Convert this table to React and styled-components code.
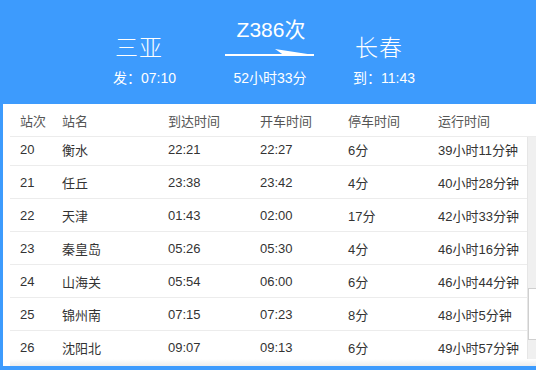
import styled, { createGlobalStyle } from "styled-components";

const GlobalStyle = createGlobalStyle`
  html, body {
    margin: 0;
    padding: 0;
  }
  body {
    font-family: "Liberation Sans", "Noto Sans CJK SC", sans-serif;
    background: #3d9bfd;
  }
`;

const stops = [
  { no: 20, name: "衡水", arrive: "22:21", depart: "22:27", stay: "6分", run: "39小时11分钟" },
  { no: 21, name: "任丘", arrive: "23:38", depart: "23:42", stay: "4分", run: "40小时28分钟" },
  { no: 22, name: "天津", arrive: "01:43", depart: "02:00", stay: "17分", run: "42小时33分钟" },
  { no: 23, name: "秦皇岛", arrive: "05:26", depart: "05:30", stay: "4分", run: "46小时16分钟" },
  { no: 24, name: "山海关", arrive: "05:54", depart: "06:00", stay: "6分", run: "46小时44分钟" },
  { no: 25, name: "锦州南", arrive: "07:15", depart: "07:23", stay: "8分", run: "48小时5分钟" },
  { no: 26, name: "沈阳北", arrive: "09:07", depart: "09:13", stay: "6分", run: "49小时57分钟" },
];

const Page = styled.div`
  width: 536px;
  height: 370px;
  background: #3d9bfd;
  display: flex;
  flex-direction: column;
  overflow: hidden;
`;

const Banner = styled.div`
  height: 104px;
  display: flex;
  justify-content: center;
  align-items: flex-start;
  padding-left: 4px;
  gap: 40px;
  color: #fff;
  box-sizing: border-box;
`;

const City = styled.div`
  width: 70px;
  display: flex;
  flex-direction: column;
  padding-top: 32px;
`;

const CityName = styled.div`
  font-family: "Noto Sans CJK SC", sans-serif;
  font-size: 23px;
  font-weight: 300;
  line-height: 28px;
  letter-spacing: 1px;
`;

const TimeText = styled.div`
  font-size: 14px;
  line-height: 18px;
  margin-top: 9px;
  margin-left: -2px;
  white-space: nowrap;
`;

const Middle = styled.div`
  width: 90px;
  display: flex;
  flex-direction: column;
  align-items: center;
  padding-top: 18px;
`;

const TrainNo = styled.div`
  font-size: 21px;
  line-height: 24px;
  margin-left: 2px;
  white-space: nowrap;
`;

const Arrow = styled.svg`
  display: block;
  margin-top: 7px;
`;

const Duration = styled.div`
  font-size: 14px;
  line-height: 18px;
  margin-top: 12px;
  white-space: nowrap;
`;

const Panel = styled.div`
  flex: 1;
  margin: 0 0 4px 3px;
  background: #fff;
  padding-left: 7px;
  display: flex;
  flex-direction: column;
  overflow: hidden;
`;

const Row = styled.div`
  display: grid;
  grid-template-columns: 42px 106px 92px 88px 90px 1fr;
  align-items: center;
  height: 32px;
  padding-left: 10px;
  border-bottom: 1px solid #ececec;
  font-size: 13px;
  color: ${(p) => (p.$head ? "#555" : "#333")};
  white-space: nowrap;
`;

const Body = styled.div`
  flex: 1;
  display: flex;
  overflow: hidden;
`;

const Rows = styled.div`
  flex: 1;
  margin-top: -4px;
`;

const ScrollTrack = styled.div`
  width: 8px;
  background: #f0f0f0;
  border-left: 1px solid #e6e6e6;
  display: flex;
  flex-direction: column;
`;

const Thumb = styled.div`
  margin-top: 151px;
  height: 50px;
  background: #fff;
  border: 1px solid #cfcfcf;
  border-right: none;
`;

const BottomFade = styled.div`
  height: 7px;
  background: linear-gradient(#ffffff, #ededed);
`;

export default function App() {
  return (
    <>
      <GlobalStyle />
      <Page>
        <Banner>
          <City>
            <CityName>三亚</CityName>
            <TimeText>发：07:10</TimeText>
          </City>
          <Middle>
            <TrainNo>Z386次</TrainNo>
            <Arrow width="90" height="8" viewBox="0 0 90 8">
              <rect x="0" y="5" width="89" height="2" fill="#fff" />
              <polygon points="50,0 89,6 89,7 60,7" fill="#fff" />
            </Arrow>
            <Duration>52小时33分</Duration>
          </Middle>
          <City>
            <CityName>长春</CityName>
            <TimeText>到：11:43</TimeText>
          </City>
        </Banner>
        <Panel>
          <Row $head>
            <span>站次</span>
            <span>站名</span>
            <span>到达时间</span>
            <span>开车时间</span>
            <span>停车时间</span>
            <span>运行时间</span>
          </Row>
          <Body>
            <Rows>
              {stops.map((s) => (
                <Row key={s.no}>
                  <span>{s.no}</span>
                  <span>{s.name}</span>
                  <span>{s.arrive}</span>
                  <span>{s.depart}</span>
                  <span>{s.stay}</span>
                  <span>{s.run}</span>
                </Row>
              ))}
            </Rows>
            <ScrollTrack>
              <Thumb />
            </ScrollTrack>
          </Body>
          <BottomFade />
        </Panel>
      </Page>
    </>
  );
}
